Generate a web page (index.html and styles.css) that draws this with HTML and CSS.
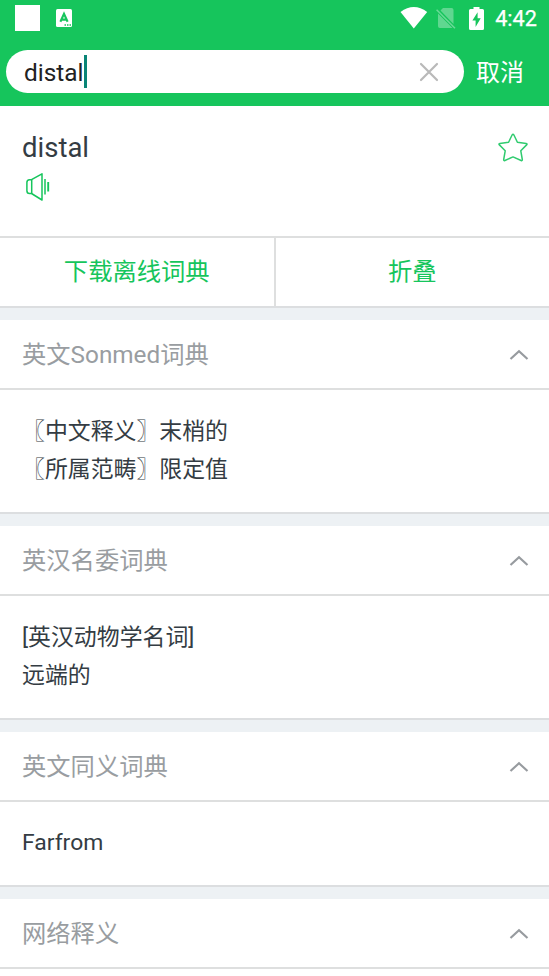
FILE: index.html
```html
<!DOCTYPE html>
<html lang="zh-CN">
<head>
<meta charset="utf-8">
<title>distal</title>
<link rel="stylesheet" href="styles.css">
</head>
<body>
<header class="top">
  <div class="status">
    <span class="status-square"></span>
    <svg class="status-app" width="16" height="18" viewBox="0 0 16 18"><rect width="16" height="18" rx="1.5" fill="#fff"/><path d="M4.400 12.800 8 4.800l3.600 8M5.600 10.600h4.800" fill="none" stroke="#16c55c" stroke-width="2.100"/><path d="M8.500 16h1.500M11 16h1.500M13.500 16H15" stroke="#16c55c" stroke-width="1.300"/></svg>
    <span class="spacer"></span>
    <svg class="wifi" width="28" height="22" viewBox="0 0 28 22"><path d="M0.500 5Q13.800-4.800 27.200 5L13.800 21.500Z" fill="#fff"/></svg>
    <svg class="sim" width="20" height="21" viewBox="0 0 20 21"><path d="M7 0H15.500Q17.500 0 17.500 2V16L4.500 2.500ZM2 5.500 16.500 20H3.800Q2 20 2 18Z" fill="#fff" opacity=".32"/><path d="M.6 1.800 19 20.200" stroke="#fff" stroke-width="1.500" opacity=".36"/></svg>
    <svg class="battery" width="15" height="23" viewBox="0 0 15 23"><path d="M4.500 0h6v2H13.500Q15 2 15 3.500V21.500Q15 23 13.500 23H1.500Q0 23 0 21.500V3.500Q0 2 1.500 2H4.500Z" fill="#fff"/><path d="M8.600 5.200 3.400 13.500H6.600V20L11.700 11.200H8.600Z" fill="#16c55c"/></svg>
    <span class="clock">4:42</span>
  </div>
  <div class="search-row">
    <div class="search">
      <span class="query">distal</span><span class="caret"></span>
      <svg class="clear" width="20" height="20" viewBox="0 0 20 20"><path d="M2 2 18 18M18 2 2 18" stroke="#b9b9b9" stroke-width="2.200" stroke-linecap="round"/></svg>
    </div>
    <span class="cancel">取消</span>
  </div>
</header>
<main>
  <section class="word">
    <div>
      <h1 class="headword">distal</h1>
      <svg class="speaker" width="26" height="30" viewBox="0 0 26 30" fill="none" stroke="#16c55c" stroke-width="1.500"><path d="M6.500 7.700H4.500Q1.900 7.700 1.900 10.500V18.700Q1.900 21.500 4.500 21.500H6.500L17 28V1.800Z" stroke-linejoin="round"/><path d="M6.700 7.700V21.500M20 7V22.500" /><path d="M23.200 10V19.500" stroke-width="1.900"/></svg>
    </div>
    <svg class="star" width="30" height="29" viewBox="0 0 30 29"><path d="M14.200 1.800Q15 .5 15.800 1.800L19.400 9.300 28.200 10.400Q29.700 10.700 28.600 11.900L22.800 17.800 24.300 26.500Q24.400 28 23.100 27.500L15 23.900 6.900 27.500Q5.600 28 5.700 26.500L7.200 17.800 1.400 11.900Q.3 10.700 1.800 10.400L10.600 9.300Z" fill="none" stroke="#30cb6f" stroke-width="1.500" stroke-linejoin="round"/></svg>
  </section>
  <nav class="actions"><span class="action">下载离线词典</span><span class="action">折叠</span></nav>

  <section class="dict">
    <h2 class="dict-head">英文Sonmed词典<svg class="chevron" width="20" height="12" viewBox="0 0 20 12"><path d="M1.500 10 10 2.300 18.500 10"/></svg></h2>
    <div class="dict-body"><p>〖中文释义〗末梢的</p><p>〖所属范畴〗限定值</p></div>
  </section>
  <section class="dict">
    <h2 class="dict-head">英汉名委词典<svg class="chevron" width="20" height="12" viewBox="0 0 20 12"><path d="M1.500 10 10 2.300 18.500 10"/></svg></h2>
    <div class="dict-body"><p>[英汉动物学名词]</p><p>远端的</p></div>
  </section>
  <section class="dict">
    <h2 class="dict-head">英文同义词典<svg class="chevron" width="20" height="12" viewBox="0 0 20 12"><path d="M1.500 10 10 2.300 18.500 10"/></svg></h2>
    <div class="dict-body dict-body-single"><p>Farfrom</p></div>
  </section>
  <section class="dict">
    <h2 class="dict-head">网络释义<svg class="chevron" width="20" height="12" viewBox="0 0 20 12"><path d="M1.500 10 10 2.300 18.500 10"/></svg></h2>
    <div class="dict-body"></div>
  </section>
</main>
</body>
</html>
```
FILE: styles.css
```css
* { box-sizing: border-box; margin: 0; padding: 0; }
html { height: 976px; overflow: hidden; }
body {
  height: 976px;
  overflow: hidden;
  background: #fff;
  color: #343c43;
  font-family: Roboto, "Noto Sans CJK SC", sans-serif;
  font-size: 22.9px;
}
svg { display: block; flex: none; }
.top { height: 106px; background: #16c55c; color: #fff; }
.status { height: 50px; display: flex; align-items: flex-start; padding: 0 12px 0 15px; }
.status-square { width: 25px; height: 26px; margin-top: 5px; background: #fff; }
.status-app { margin: 9px 0 0 16px; }
.spacer { flex: 1; }
.wifi { margin-top: 7px; }
.sim { margin: 8px 0 0 8px; }
.battery { margin: 7px 0 0 13px; }
.clock { margin: 6px 0 0 11px; font-size: 21.7px; line-height: 26px; font-weight: 400; -webkit-text-stroke: .25px #fff; }
.search-row { display: flex; align-items: center; padding-left: 6px; height: 43px; }
.search {
  width: 458px;
  height: 43px;
  padding: 0 25px 0 18px;
  border-radius: 22px;
  background: #fff;
  display: flex;
  align-items: center;
}
.query { color: #222; font-size: 24.4px; line-height: 43px; padding-top: 2px; }
.caret { width: 3px; height: 33px; background: #098577; margin-left: 1px; }
.clear { margin-left: auto; }
.cancel { margin-left: 12px; padding-top: 3px; font-size: 24px; line-height: 43px; }
.word {
  height: 132px;
  border-bottom: 2px solid #dedfdf;
  display: flex;
  justify-content: space-between;
  padding: 25px 21px 0 22px;
}
.headword { font-size: 27.500px; font-weight: 400; line-height: 34px; }
.speaker { margin: 7px 0 0 3px; }
.star { margin-top: 2px; }
.actions { display: flex; height: 70px; border-bottom: 2px solid #dcdee0; }
.action {
  flex: 1;
  text-align: center;
  color: #16c55c;
  font-size: 24.3px;
  line-height: 67px;
}
.action + .action { border-left: 2px solid #dedfdf; }
.dict { border-top: 12px solid #edf1f4; }
.dict-head {
  height: 70px;
  padding: 1px 20px 0 22px;
  border-bottom: 2px solid #dedfdf;
  display: flex;
  align-items: center;
  justify-content: space-between;
  color: #999da1;
  font-size: 24.3px;
  font-weight: 400;
  line-height: 67px;
}
.chevron { margin-top: 1px; fill: none; stroke: #979b9f; stroke-width: 2.200; }
.dict-body { padding: 23px 22px 23px; border-bottom: 2px solid #dcdee0; }
.dict-body-single { padding: 22px 22px 23px; }
.dict-body p { line-height: 38px; }
```
